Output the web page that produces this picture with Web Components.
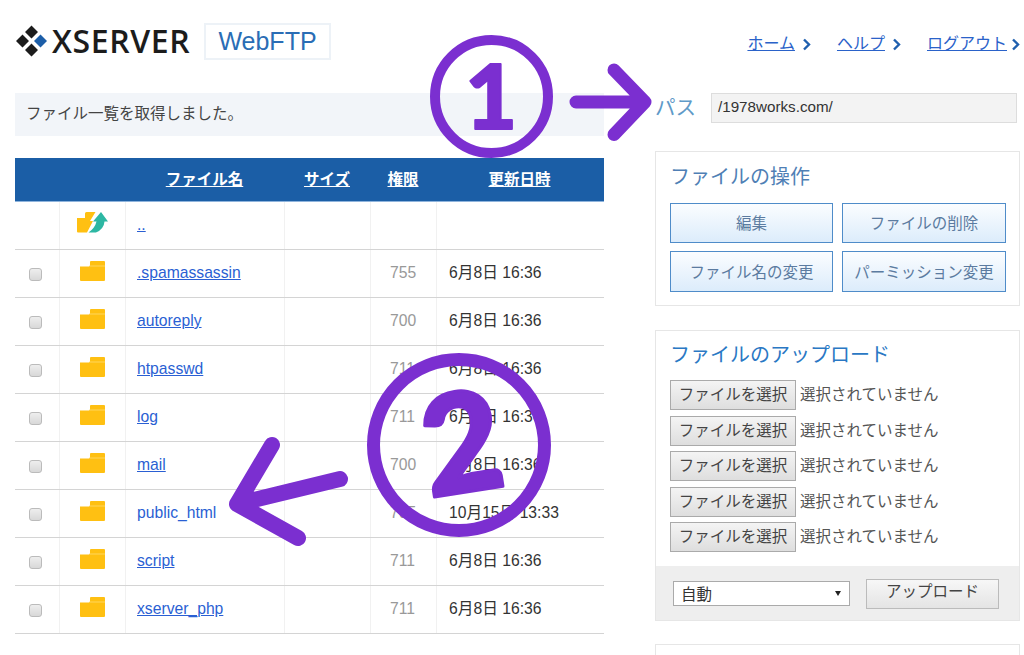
<!DOCTYPE html>
<html lang="ja">
<head>
<meta charset="utf-8">
<title>WebFTP</title>
<style>
    html, body { margin: 0; padding: 0; height: 655px; overflow: hidden; background: #fff; }
    body { font-family: "Liberation Sans", "Noto Sans CJK JP", sans-serif; font-size: 15px; color: #333; }
</style>
</head>
<body>
<ftp-page>
    <ftp-logo slot="logo"></ftp-logo>
    <ftp-nav slot="nav"></ftp-nav>
    <ftp-notice slot="left">ファイル一覧を取得しました。</ftp-notice>
    <file-table slot="left">
        <file-row up name=".."></file-row>
        <file-row name=".spamassassin" perm="755" date="6月8日 16:36"></file-row>
        <file-row name="autoreply" perm="700" date="6月8日 16:36"></file-row>
        <file-row name="htpasswd" perm="711" date="6月8日 16:36"></file-row>
        <file-row name="log" perm="711" date="6月8日 16:36"></file-row>
        <file-row name="mail" perm="700" date="6月8日 16:36"></file-row>
        <file-row name="public_html" plain perm="705" date="10月15日 13:33"></file-row>
        <file-row name="script" perm="711" date="6月8日 16:36"></file-row>
        <file-row name="xserver_php" perm="711" date="6月8日 16:36"></file-row>
    </file-table>
    <ftp-path slot="right" value="/1978works.com/"></ftp-path>
    <ftp-panel slot="right" heading="ファイルの操作">
        <ftp-actions>
            <action-button>編集</action-button>
            <action-button>ファイルの削除</action-button>
            <action-button>ファイル名の変更</action-button>
            <action-button>パーミッション変更</action-button>
        </ftp-actions>
    </ftp-panel>
    <ftp-panel slot="right" heading="ファイルのアップロード" bright>
        <file-pick></file-pick>
        <file-pick></file-pick>
        <file-pick></file-pick>
        <file-pick></file-pick>
        <file-pick></file-pick>
        <upload-bar slot="footer"></upload-bar>
    </ftp-panel>
    <ftp-panel slot="right" heading=""></ftp-panel>
</ftp-page>
<ftp-marks></ftp-marks>

<script>
const JP = `"Liberation Sans", "Noto Sans CJK JP", sans-serif`;

class FtpPage extends HTMLElement {
    constructor() {
        super();
        this.attachShadow({ mode: 'open' });
    }
    connectedCallback() {
        this.shadowRoot.innerHTML = `
            <style>
                :host{ display: block; height: 655px; box-sizing: border-box; overflow: hidden; padding: 22px 4px 0 15px; }
                header{ display: flex; justify-content: space-between; align-items: flex-start; height: 71px; }
                .cols{ display: grid; grid-template-columns: 589px 365px; column-gap: 51px; }
                .left, .right{ display: flex; flex-direction: column; }
                .left{ gap: 22px; }
            </style>
            <header><slot name="logo"></slot><slot name="nav"></slot></header>
            <div class="cols">
                <div class="left"><slot name="left"></slot></div>
                <div class="right"><slot name="right"></slot></div>
            </div>
        `;
    }
}

class FtpLogo extends HTMLElement {
    constructor() {
        super();
        this.attachShadow({ mode: 'open' });
    }
    connectedCallback() {
        this.shadowRoot.innerHTML = `
            <style>
                :host{ display: flex; align-items: center; height: 38px; }
                svg{ width: 33px; height: 33px; display: block; margin-right: 4px; }
                .brand{ font: 600 32px/1 "Open Sans", "Liberation Sans", sans-serif; letter-spacing: .6px; color: #1c1c1c; width: 137px; white-space: nowrap; }
                .app{ margin-left: 15px; width: 127px; height: 37px; box-sizing: border-box; border: 2px solid #edf2f7; color: #2a6db5;
                    font: 25px/33px "Liberation Sans", sans-serif; text-align: center; }
            </style>
            <svg viewBox="0 0 33 33">
                <path fill="#1c1c1c" d="M16.5 0.5 L23 7 L16.5 13.5 L10 7Z M7.5 9.5 L14 16 L7.5 22.5 L1 16Z M16.5 18.5 L23 25 L16.5 31.5 L10 25Z"/>
                <path fill="#1c5ea8" d="M25.5 9.5 L32 16 L25.5 22.5 L19 16Z"/>
            </svg>
            <div class="brand">XSERVER</div>
            <div class="app">WebFTP</div>
        `;
    }
}

class FtpNav extends HTMLElement {
    constructor() {
        super();
        this.attachShadow({ mode: 'open' });
    }
    connectedCallback() {
        let links = "";
        for (let label of ["ホーム", "ヘルプ", "ログアウト"]) {
            links += `<a>${label}</a><svg viewBox="0 0 9 13"><path d="M2 1.5 L7 6.5 L2 11.5" fill="none" stroke="#1f5fae" stroke-width="2.4"/></svg>`;
        }
        this.shadowRoot.innerHTML = `
            <style>
                :host{ display: flex; align-items: center; margin-top: 10px; font: 16px/24px ${JP}; }
                a{ color: #2a62c9; text-decoration: underline; }
                svg{ width: 9px; height: 13px; margin: 0 26px 0 7px; }
                svg:last-child{ margin: 0 0 0 4px; }
            </style>
            ${links}
        `;
    }
}

class FtpNotice extends HTMLElement {
    constructor() {
        super();
        this.attachShadow({ mode: 'open' });
    }
    connectedCallback() {
        this.shadowRoot.innerHTML = `
            <style>
                :host{ display: block; height: 43px; box-sizing: border-box; padding: 0 11px; background: #f2f5f9; color: #444; font: 15.5px/42px ${JP}; }
            </style>
            <slot></slot>
        `;
    }
}

class FileTable extends HTMLElement {
    constructor() {
        super();
        this.attachShadow({ mode: 'open' });
    }
    connectedCallback() {
        this.shadowRoot.innerHTML = `
            <style>
                :host{ display: block; }
                .head{ display: grid; grid-template-columns: 111px 159px 86px 66px 167px; height: 44px; box-sizing: border-box; background: #1b5ea6; color: #fff;
                    border-bottom: 1px solid #8fb4dc; font: 700 15.5px/43px ${JP}; text-align: center; text-decoration: underline; }
                .head span{ padding-right: 2px; }
            </style>
            <div class="head"><span></span><span>ファイル名</span><span>サイズ</span><span>権限</span><span>更新日時</span></div>
            <slot></slot>
        `;
    }
}

class FileRow extends HTMLElement {
    constructor() {
        super();
        this.attachShadow({ mode: 'open' });
    }
    connectedCallback() {
        const up = this.hasAttribute('up');
        const plain = this.hasAttribute('plain');
        const folder = `<svg class="folder" viewBox="0 0 25 20"><path fill="#ffc012" d="M0 5.5 H9 L10 4.5 V1 Q10 0 11 0 H24 Q25 0 25 1 V19 Q25 20 24 20 H1 Q0 20 0 19Z"/><path fill="#ffd65c" d="M10 4.5 H25 V5.5 H9Z"/></svg>`;
        const upIcon = `<svg class="up" viewBox="0 0 31 21"><path fill="#ffc012" d="M0 6 H8 V1.5 Q8 0 9.5 0 H18.5 L13 9 H16 L10 20.5 H1 Q0 20.5 0 19.5Z"/><path fill="#2db7a3" d="M24 0 L31 9.5 H27.5 Q27 17 19 20.5 H11.5 Q18 16 19.5 9.5 H16Z"/></svg>`;
        this.shadowRoot.innerHTML = `
            <style>
                :host{ display: grid; grid-template-columns: 45px 66px 159px 86px 66px 167px; height: 48px; box-sizing: border-box;
                    border-bottom: 1px solid #d4d4d4; font: 15.7px/1 ${JP}; color: #333; }
                div{ display: flex; align-items: center; box-sizing: border-box; border-right: 1px solid #f1f1f1; }
                div:last-child{ border-right: 0; padding: 0 0 2px 12px; }
                .check, .icon{ justify-content: center; }
                .name{ padding: 0 0 2px 11px; }
                .name span{ color: #2a5fd3; ${plain ? '' : 'text-decoration: underline;'} }
                .perm{ padding: 0 0 2px 19px; color: #999; }
                .box{ width: 13px; height: 13px; box-sizing: border-box; border: 1px solid #bbb; border-radius: 3px; background: linear-gradient(#eee, #d8d8d8); margin-right: 4px; margin-top: 1px; }
                .folder{ width: 25px; height: 20px; margin-bottom: 5px; }
                .up{ width: 31px; height: 21px; margin-bottom: 6px; }
            </style>
            <div class="check">${up ? '' : '<span class="box"></span>'}</div>
            <div class="icon">${up ? upIcon : folder}</div>
            <div class="name"><span>${this.getAttribute('name')}</span></div>
            <div></div>
            <div class="perm">${this.getAttribute('perm') || ''}</div>
            <div>${this.getAttribute('date') || ''}</div>
        `;
    }
}

class FtpPath extends HTMLElement {
    constructor() {
        super();
        this.attachShadow({ mode: 'open' });
    }
    connectedCallback() {
        this.shadowRoot.innerHTML = `
            <style>
                :host{ display: flex; align-items: center; height: 30px; margin-bottom: 28px; color: #5f9ac8; font: 20.5px/30px ${JP}; }
                .label{ width: 56px; }
                .field{ width: 306px; height: 30px; box-sizing: border-box; border: 1px solid #ddd; background: #f3f3f3; padding-left: 6px;
                    color: #333; font: 15.2px/25px "Liberation Sans", sans-serif; }
            </style>
            <span class="label">パス</span><div class="field">${this.getAttribute('value')}</div>
        `;
    }
}

class FtpPanel extends HTMLElement {
    constructor() {
        super();
        this.attachShadow({ mode: 'open' });
    }
    connectedCallback() {
        const bright = this.hasAttribute('bright');
        this.shadowRoot.innerHTML = `
            <style>
                :host{ display: block; border: 1px solid #e6e6e6; margin-bottom: ${bright ? '23px' : '24px'}; }
                h2{ margin: 0; padding: ${bright ? '11px' : '12px'} 14px 0; height: 41px; box-sizing: border-box; font: 400 20px/26px ${JP}; color: ${bright ? '#2a78c4' : '#4f7fb5'}; }
                .body{ padding: ${bright ? '8px 14px 14px' : '10px 14px 13px'}; }
            </style>
            <h2>${this.getAttribute('heading')}</h2>
            <div class="body"><slot></slot></div>
            <slot name="footer"></slot>
        `;
    }
}

class FtpActions extends HTMLElement {
    constructor() {
        super();
        this.attachShadow({ mode: 'open' });
    }
    connectedCallback() {
        this.shadowRoot.innerHTML = `
            <style>
                :host{ display: grid; grid-template-columns: 163px 164px; grid-template-rows: 40px 41px; gap: 8px 9px; }
            </style>
            <slot></slot>
        `;
    }
}

class ActionButton extends HTMLElement {
    constructor() {
        super();
        this.attachShadow({ mode: 'open' });
    }
    connectedCallback() {
        this.shadowRoot.innerHTML = `
            <style>
                :host{ display: block; }
                button{ display: block; width: 100%; height: 100%; box-sizing: border-box; padding: 2px 0 0; border: 1px solid #4f8cc9; border-radius: 0;
                    background: linear-gradient(#fbfdff, #dcecfb); color: #5b7ba0; font: 15.5px/1 ${JP}; }
            </style>
            <button><slot></slot></button>
        `;
    }
}

class FilePick extends HTMLElement {
    constructor() {
        super();
        this.attachShadow({ mode: 'open' });
    }
    connectedCallback() {
        this.shadowRoot.innerHTML = `
            <style>
                :host{ display: flex; align-items: center; height: 30px; margin-bottom: 5.5px; font: 15.5px/1 ${JP}; color: #555; }
                :host(:last-of-type){ margin-bottom: 0; }
                button{ width: 126px; height: 30px; box-sizing: border-box; padding: 0; margin-right: 4px; border: 1px solid #aaa; border-radius: 0;
                    background: linear-gradient(#f4f4f4, #dedede); color: #444; font: 15.5px/1 ${JP}; }
            </style>
            <button>ファイルを選択</button><span>選択されていません</span>
        `;
    }
}

class UploadBar extends HTMLElement {
    constructor() {
        super();
        this.attachShadow({ mode: 'open' });
    }
    connectedCallback() {
        this.shadowRoot.innerHTML = `
            <style>
                :host{ display: flex; align-items: center; height: 54px; padding-left: 17px; background: #eee; }
                .select{ position: relative; width: 177px; height: 25px; box-sizing: border-box; border: 1px solid #aaa; background: #fff;
                    padding: 1px 0 0 7px; color: #333; font: 15.5px/24px ${JP}; }
                .select i{ position: absolute; right: 8px; top: 9px; width: 0; height: 0; border: 3.5px solid transparent; border-top: 5px solid #222; border-bottom: 0; }
                button{ width: 133px; height: 30px; margin: 1px 0 0 16px; box-sizing: border-box; padding: 0 0 3px; border: 1px solid #bbb; border-radius: 0;
                    background: linear-gradient(#f7f7f7, #e4e4e4); color: #444; font: 15.5px/1 ${JP}; }
            </style>
            <div class="select">自動<i></i></div><button>アップロード</button>
        `;
    }
}

// 紫の注釈は画面の上に重ねるだけなので absolute
class FtpMarks extends HTMLElement {
    constructor() {
        super();
        this.attachShadow({ mode: 'open' });
    }
    connectedCallback() {
        this.shadowRoot.innerHTML = `
            <style>
                :host{ position: absolute; left: 0; top: 0; width: 1024px; height: 655px; pointer-events: none; }
                svg{ display: block; }
                text{ font-family: "Lato", "Liberation Sans", sans-serif; font-weight: 900; fill: #7b2fd0; stroke: #7b2fd0; stroke-linejoin: round; text-anchor: middle; }
            </style>
            <svg width="1024" height="655" viewBox="0 0 1024 655" fill="none" stroke="#7b2fd0" stroke-linecap="round" stroke-linejoin="round">
                <circle cx="491.5" cy="96.5" r="56.5" stroke-width="10"/>
                <text x="491" y="129" font-size="90" stroke-width="2">1</text>
                <path d="M576 102 H644 M614 70 L645 102 L614 134.5" stroke-width="13"/>
                <circle cx="459" cy="445" r="85.5" stroke-width="13"/>
                <text x="462" y="492" font-size="138" stroke-width="3" transform="rotate(-9 462 445)">2</text>
                <path d="M340 479 L237 504 M272 445 L237 504 L298 538" stroke-width="16"/>
            </svg>
        `;
    }
}

customElements.define('ftp-page', FtpPage);
customElements.define('ftp-logo', FtpLogo);
customElements.define('ftp-nav', FtpNav);
customElements.define('ftp-notice', FtpNotice);
customElements.define('file-table', FileTable);
customElements.define('file-row', FileRow);
customElements.define('ftp-path', FtpPath);
customElements.define('ftp-panel', FtpPanel);
customElements.define('ftp-actions', FtpActions);
customElements.define('action-button', ActionButton);
customElements.define('file-pick', FilePick);
customElements.define('upload-bar', UploadBar);
customElements.define('ftp-marks', FtpMarks);
</script>
</body>
</html>
